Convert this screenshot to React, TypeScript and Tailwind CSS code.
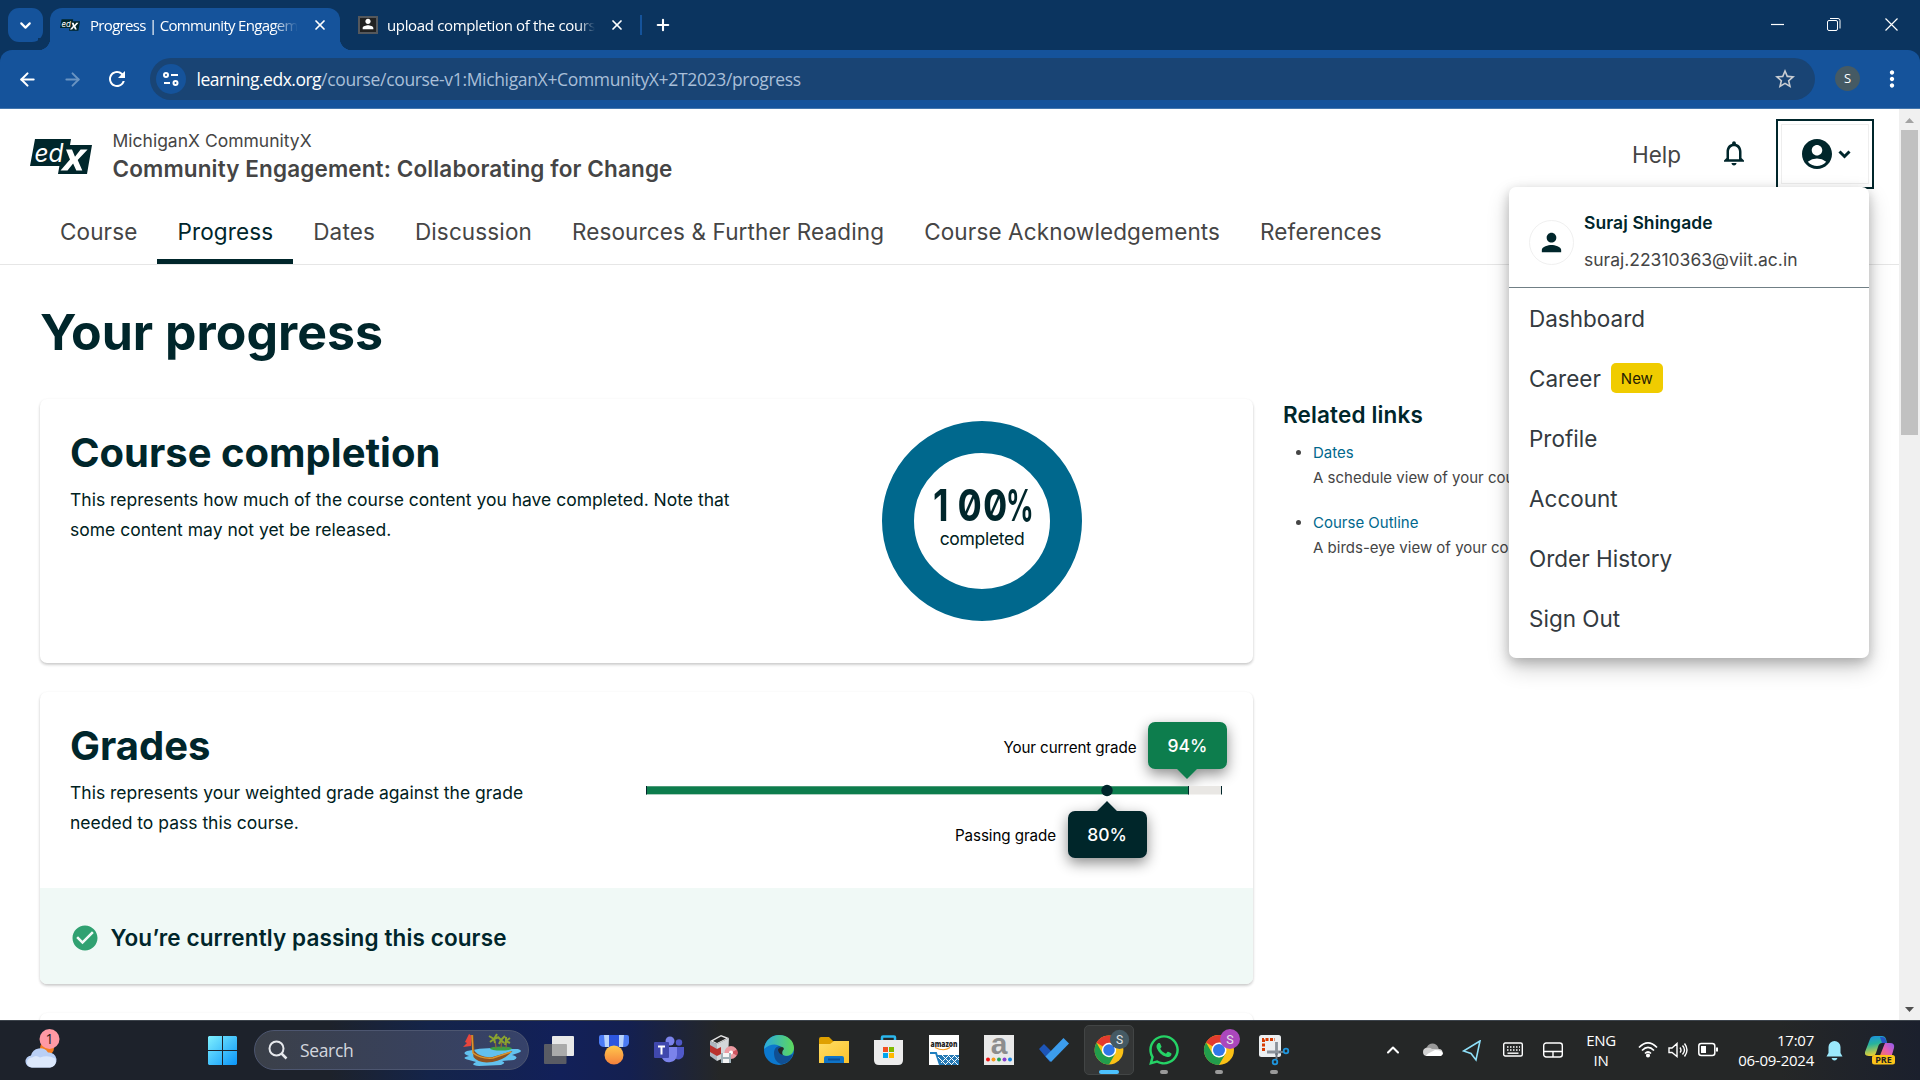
import React from "react";
import { ArrowLeft, ArrowRight, X, Plus, ChevronUp, ChevronDown } from "lucide-react";
import { MdRefresh, MdStarBorder, MdAccountCircle, MdPerson, MdNotificationsNone, MdCheckCircle, MdMoreVert } from "react-icons/md";
import { FaWhatsapp } from "react-icons/fa";

const UI = "font-['Open_Sans','Noto_Sans',sans-serif]";
const INTER = "font-['Inter',sans-serif]";

function EdxLogo({ className }: { className: string }) {
  return (
    <svg className={className} viewBox="0 0 62 35">
      <path d="M5 0h36l-1 6H62l-5 29H28l1.400-8H0z" fill="#00262b" />
      <text x="4.500" y="23" fontFamily="Inter, sans-serif" fontSize="25" fontStyle="italic" fill="#fff" textLength="29" lengthAdjust="spacingAndGlyphs">ed</text>
      <path d="M36 10.500h6l3 7.300 5.600-7.300h7L47.700 21l4.600 10.500h-6l-3.200-7-5.600 7h-7l9.500-11z" fill="#fff" />
    </svg>
  );
}

function BrowserTabs() {
  return (
    <div className={`flex h-[50px] bg-[#0b345f] text-white ${UI}`}>
      <div className="ml-[8px] mt-[8px] flex h-[34px] w-[35px] items-center justify-center rounded-[11px] bg-[#15539b]">
        <ChevronDown size={17} strokeWidth={3} />
      </div>
      <div className="relative ml-[7px] mt-[8px] flex h-[42px] w-[290px] rounded-t-[12px] bg-[#15539b]">
        <div className="absolute -left-[12px] bottom-0 size-[12px] bg-[radial-gradient(circle_at_0_0,#0b345f_12px,#15539b_12.5px)]" />
        <div className="absolute -right-[12px] bottom-0 size-[12px] bg-[radial-gradient(circle_at_100%_0,#0b345f_12px,#15539b_12.5px)]" />
        <EdxLogo className="ml-[10px] mt-[11px] h-[12px] w-[20px]" />
        <div className="ml-[10px] mt-[7px] w-[208px] shrink-0 overflow-hidden whitespace-nowrap text-[15px] leading-[20px] tracking-[-0.68px] [mask-image:linear-gradient(90deg,#000_88%,transparent)]">Progress | Community Engagement</div>
        <X className="ml-[14px] mt-[9px] shrink-0" size={16} strokeWidth={2.6} />
      </div>
      <div className="ml-[18px] mt-[16px] flex h-[18px] w-[20px] items-end justify-center border-[2px] border-[#55585c] bg-[#222]">
        <MdPerson size={16} color="#fff" />
      </div>
      <div className="ml-[9px] mt-[15px] w-[208px] shrink-0 overflow-hidden whitespace-nowrap text-[15px] leading-[20px] tracking-[-0.35px] [mask-image:linear-gradient(90deg,#000_92%,transparent)]">upload completion of the course</div>
      <X className="ml-[14px] mt-[17px]" size={16} strokeWidth={2.6} />
      <div className="ml-[15px] mt-[15px] h-[20px] w-[2px] bg-[#15539b]" />
      <Plus className="ml-[12px] mt-[16px]" size={18} strokeWidth={2.8} />
      <div className="flex-1" />
      <svg className="h-[50px] w-[149px]" viewBox="0 0 149 50" fill="none" stroke="#fff">
        <path d="M0 24.500h13" strokeWidth="1.200" />
        <rect x="56.500" y="20.500" width="10" height="10" rx="1.500" />
        <path d="M59 18.500h8q2 0 2 2v8" />
        <path d="M114.500 18.500l12 12m0-12l-12 12" strokeWidth="1.200" />
      </svg>
    </div>
  );
}

function Toolbar() {
  return (
    <div className="bg-[#0b345f]">
      <div className={`flex h-[59px] items-start rounded-t-[12px] border-b border-[#4376ad] bg-[#15539b] text-white ${UI}`}>
        <ArrowLeft className="ml-[17px] mt-[18.5px]" size={21} strokeWidth={2.4} />
        <ArrowRight className="ml-[24px] mt-[18.5px] text-[#6a94c2]" size={21} strokeWidth={2.2} />
        <MdRefresh className="ml-[22px] mt-[16.5px]" size={24} />
        <div className="ml-[21px] mt-[8px] flex h-[42px] w-[1665px] items-center rounded-full bg-[#194474]">
          <div className="ml-[6px] flex size-[30px] items-center justify-center rounded-full bg-[#15539b]">
            <svg width="16" height="16" viewBox="0 0 16 16" fill="none" stroke="#fff" strokeWidth="2">
              <circle cx="3" cy="4" r="2" /><path d="M8 4h7M1 12h6" /><circle cx="12.500" cy="12" r="2" />
            </svg>
          </div>
          <div className="ml-[10.5px] flex-1 whitespace-nowrap text-[17.5px] leading-[24px] tracking-[-0.5px]">
            learning.edx.org<span className="tracking-[-0.34px] text-[#a9bfd8]">/course/course-v1:MichiganX+CommunityX+2T2023/progress</span>
          </div>
          <MdStarBorder className="mr-[18px]" size={24} color="#c9cdd2" />
        </div>
        <div className="ml-[20px] mt-[16px] flex size-[25px] items-center justify-center rounded-full bg-[#455a64] text-[13px]">S</div>
        <MdMoreVert className="ml-[19px] mt-[16px]" size={26} />
      </div>
    </div>
  );
}

const menu = ["Dashboard", "Career", "Profile", "Account", "Order History", "Sign Out"];

function AccountMenu() {
  return (
    <div className="absolute left-[1509px] top-[78px] z-10 h-[471px] w-[360px] rounded-[7px] bg-white text-[22.5px] leading-[30px] text-[#333a40] shadow-[0_10px_22px_rgba(0,0,0,.2),0_4px_12px_rgba(0,0,0,.2)]">
      <div className="flex h-[101px] border-b border-[#707f85]">
        <div className="ml-[20px] mt-[33px] flex size-[45px] items-center justify-center rounded-full border border-[#f0f0f0] text-[#00262b]">
          <MdPerson size={29} />
        </div>
        <div className="ml-[10px] whitespace-nowrap">
          <div className="mt-[21px] text-[17.5px] font-semibold leading-[30px] tracking-[0.08px] text-[#00262b]">Suraj Shingade</div>
          <div className="mt-[7px] text-[17.5px] leading-[30px] text-[#454545]">suraj.22310363@viit.ac.in</div>
        </div>
      </div>
      {menu.map((m) => (
        <div key={m} className="flex h-[60px] items-center pl-[20px] pt-[2px]">
          {m}
          {m === "Career" && <span className="ml-[10px] mt-[-2px] flex h-[30px] w-[52px] items-center justify-center rounded-[5px] bg-[#f0cc00] pt-[2px] text-[15px] text-[#262003]">New</span>}
        </div>
      ))}
    </div>
  );
}

const tabs = ["Course", "Progress", "Dates", "Discussion", "Resources & Further Reading", "Course Acknowledgements", "References"];

function CourseHeader() {
  return (
    <header className="h-[156px] border-b border-[#e6e6e6]">
      <div className="flex h-[94px]">
        <EdxLogo className="ml-[30px] mt-[30px] h-[35px] w-[62px]" />
        <div className="ml-[20.5px] mt-[18px] flex-1 whitespace-nowrap text-[#454545]">
          <div className="text-[17.5px] leading-[28px]">MichiganX CommunityX</div>
          <div className="text-[22.5px] font-semibold leading-[28px] tracking-[0.13px]">Community Engagement: Collaborating for Change</div>
        </div>
        <div className="mt-[31px] text-[22.5px] leading-[30px] text-[#454545]">Help</div>
        <MdNotificationsNone className="ml-[38px] mt-[29px] text-[#00262b]" size={30} />
        <div className="ml-[27px] mt-[10px] h-[70px] w-[98px] border-2 border-[#00262b] p-[3px]">
          <div className="flex h-[60px] items-center justify-center border border-[#eee] pr-[1px] text-[#00262b]">
            <MdAccountCircle size={36} />
            <svg className="ml-[3px]" width="13" height="9" viewBox="0 0 13 9" fill="none" stroke="#00262b" strokeWidth="3"><path d="M1.500 1.500l5 5 5-5" /></svg>
          </div>
        </div>
        <div className="w-[25px]" />
      </div>
      <nav className="ml-[40px] flex h-[61px] text-[22.5px] tracking-[0.13px] text-[#454545]">
        {tabs.map((t) => (
          <div key={t} className={t === "Progress" ? "h-[61px] whitespace-nowrap border-b-[5px] border-[#00262b] px-[20px] pt-[14px] leading-[30px] text-[#00262b]" : "whitespace-nowrap px-[20px] pt-[14px] leading-[30px]"}>{t}</div>
        ))}
      </nav>
    </header>
  );
}

function GradeBar() {
  return (
    <svg className="h-[196px] w-[613px] overflow-visible" viewBox="640 692 613 196" fontFamily="Inter, sans-serif">
      <defs>
        <filter id="sh" x="-50%" y="-50%" width="200%" height="220%"><feDropShadow dx="0" dy="5" stdDeviation="7" floodOpacity=".45" /></filter>
      </defs>
      <g filter="url(#sh)">
        <path d="M1155 722h65a7 7 0 0 1 7 7v33a7 7 0 0 1-7 7h-23l-10 10-10-10h-22a7 7 0 0 1-7-7v-33a7 7 0 0 1 7-7z" fill="#0d7d4d" />
        <path d="M1075 811h22l10-10 10 10h23a7 7 0 0 1 7 7v33a7 7 0 0 1-7 7h-65a7 7 0 0 1-7-7v-33a7 7 0 0 1 7-7z" fill="#00262b" />
      </g>
      <rect x="646" y="786" width="576" height="8.500" fill="#e9e7e4" />
      <rect x="646" y="786.300" width="543" height="8" fill="#0d7d4d" />
      <path d="M646.500 786v8.500M1188.500 786v8.500M1221.500 786v8.500" stroke="#00262b" />
      <circle cx="1107" cy="790.500" r="5.700" fill="#00262b" />
      <text x="1003.500" y="753.200" fontSize="15.200" textLength="133">Your current grade</text>
      <text x="955" y="841.200" fontSize="15.200" textLength="101">Passing grade</text>
      <text x="1187.500" y="752" fontSize="17.500" fontWeight="500" fill="#fff" textAnchor="middle">94%</text>
      <text x="1107" y="841" fontSize="17.500" fontWeight="500" fill="#fff" textAnchor="middle">80%</text>
    </svg>
  );
}

const CARD = "rounded-[7px] bg-white shadow-[0_2px_3px_rgba(0,0,0,.14),0_1px_3px_rgba(0,0,0,.1)]";

function Page() {
  return (
    <div className={`relative flex h-[911px] overflow-hidden bg-white ${INTER}`}>
      <div className="w-[1899px]">
        <CourseHeader />
        <h1 className="ml-[40px] mt-[37px] h-[60px] whitespace-nowrap text-[50px] font-bold leading-[60px] text-[#00262b]">Your progress</h1>
        <div className="mt-[37px] flex pl-[40px]">
          <div className="w-[1213px]">
            <section className={`flex h-[264px] pl-[30px] ${CARD}`}>
              <div className="w-[812px] whitespace-nowrap text-[#002121]">
                <h2 className="mt-[29px] text-[40px] font-bold leading-[50px] text-[#00262b]">Course completion</h2>
                <p className="mt-[7px] text-[17.5px] leading-[30px]">This represents how much of the course content you have completed. Note that<br />some content may not yet be released.</p>
              </div>
              <div className="mt-[22px] flex size-[200px] flex-col items-center rounded-full border-[32px] border-[#00688d] pt-[30px] text-[#00262b]">
                <div className="flex h-[44px] w-[98px] items-center whitespace-nowrap text-[44px] font-bold leading-[44px]">
                  <span className="inline-block w-[73px] origin-left scale-x-[0.82] tracking-[1.3px] [font-feature-settings:'zero']"><span className="inline-block w-[30px]">1</span>00</span>
                  <span className="inline-block w-[25px] origin-left scale-x-[0.62]">%</span>
                </div>
                <div className="mt-[1px] text-[17.5px] leading-[22px] tracking-[-0.3px] text-[#002121]">completed</div>
              </div>
            </section>
            <section className={`mt-[29px] h-[292px] overflow-hidden ${CARD}`}>
              <div className="flex h-[196px] pl-[30px]">
                <div className="w-[570px] whitespace-nowrap text-[#002121]">
                  <h2 className="mt-[29px] text-[40px] font-bold leading-[50px] text-[#00262b]">Grades</h2>
                  <p className="mt-[7px] text-[17.5px] leading-[30px]">This represents your weighted grade against the grade<br />needed to pass this course.</p>
                </div>
                <GradeBar />
              </div>
              <div className="flex h-[96px] items-center bg-[#f0f9f6] pl-[30px] pt-[4px] text-[22.5px] font-semibold tracking-[0.12px] text-[#00262b]">
                <MdCheckCircle size={30} color="#30a171" /><span className="ml-[10.5px]">You’re currently passing this course</span>
              </div>
            </section>
            <section className={`mt-[29px] h-[60px] ${CARD}`} />
          </div>
          <aside className="ml-[30px] whitespace-nowrap text-[15px] leading-[25px] text-[#454545]">
            <h3 className="mb-[10px] mt-[1px] text-[22.5px] font-semibold leading-[30px] tracking-[0.15px] text-[#00262b]">Related links</h3>
            <ul className="list-disc pl-[30px]">
              <li className="mb-[20px]"><span className="text-[#00688d]">Dates</span><br />A schedule view of your course</li>
              <li><span className="text-[#00688d]">Course Outline</span><br />A birds-eye view of your course</li>
            </ul>
          </aside>
        </div>
      </div>
      <div className="flex w-[21px] flex-col items-center bg-[#f0f0f0]">
        <svg width="21" height="21"><path d="M6 14h9l-4.500-5z" fill="#a3a3a3" /></svg>
        <div className="h-[305px] w-[17px] bg-[#c1c1c1]" />
        <div className="flex-1" />
        <svg width="21" height="21"><path d="M6 8h9l-4.500 5z" fill="#505050" /></svg>
      </div>
      <AccountMenu />
    </div>
  );
}

function Chrome({ badge }: { badge: string }) {
  return (
    <svg width="50" height="50" viewBox="0 0 50 50">
      <circle cx="25" cy="25" r="15" fill="#fbc116" />
      <path d="M25 25L12 17.500A15 15 0 0 1 38 17.500H25z" fill="#e33b2e" />
      <path d="M12 17.500L18.500 28.800 25 32.500l6.500-3.700L25 40A15 15 0 0 1 12 17.500z" fill="#229d4c" />
      <circle cx="25" cy="25" r="7.500" fill="#fff" /><circle cx="25" cy="25" r="6" fill="#3177e8" />
      <circle cx="36" cy="14" r="10" fill={badge} />
      <text x="36" y="18.500" fontSize="12.500" fontFamily="Roboto, sans-serif" fill="#e4e8ea" textAnchor="middle">S</text>
    </svg>
  );
}

const I = ({ children }: { children: React.ReactNode }) => <svg width="30" height="30" viewBox="0 0 30 30" className="overflow-visible">{children}</svg>;

const apps: React.ReactNode[] = [
  <I><rect x="8" y="1" width="22" height="20" rx="1" fill="#e8e8e8" /><rect x="0" y="9" width="22.500" height="20" rx="1" fill="#666" fillOpacity=".85" /><rect x="8" y="9" width="14.500" height="12" fill="#aaa" /></I>,
  <I><path d="M0 2q0-2 2-2h26q2 0 2 2v6q-1 4-5 4H5Q1 12 0 8z" fill="#4b7bf5" /><path d="M5 0h5v12H6zM20 0h5l-1 12h-4z" fill="#b9d3fb" /><path d="M10 0h10v12H10z" fill="#2d56df" /><circle cx="15" cy="20" r="9.500" fill="url(#gold)" /><defs><linearGradient id="gold" x2="0" y2="1"><stop stopColor="#ffc94d" /><stop offset="1" stopColor="#f5803c" /></linearGradient></defs></I>,
  <I><circle cx="16" cy="6" r="4.500" fill="#7b83eb" /><circle cx="25" cy="7.500" r="3.200" fill="#5059c9" /><path d="M20 12h10v7a6 6 0 0 1-8 5z" fill="#5059c9" /><path d="M9 12h14v8a8 8 0 0 1-15 3z" fill="#7b83eb" /><rect y="7" width="15" height="16" rx="1" fill="#4048ad" /><path d="M4 11.500h7M7.500 11.500v8" stroke="#fff" strokeWidth="2" /></I>,
  <I><path d="M1 6l7 3v17l-7-5z" fill="#aeb6c0" /><path d="M8 9l12-6-1 18-11 5z" fill="#d3d6da" /><path d="M1 10l7 4 4-2v7l-4 2-7-4z" fill="#b9322f" /><path d="M1 6L12 0l8 3L8 9z" fill="#e6e6e6" /><path d="M4 6l8-4.500 5 2L8 8z" fill="#252525" /><circle cx="22" cy="17.500" r="6.500" fill="#ec9ba2" /><path d="M22 17.500l6-3a7 7 0 0 1 0 6z" fill="#cf5560" /><circle cx="22" cy="17.500" r="2" fill="#fff" /><path d="M12 18h10v10H12z" fill="#9fb0b8" /><path d="M14 18h6v4h-6zM14 24h6v4h-6z" fill="#f5f5f5" /></I>,
  <I><defs><linearGradient id="eg"><stop stopColor="#2aa9e0" /><stop offset="1" stopColor="#5ed95a" /></linearGradient></defs><circle cx="15" cy="15" r="15" fill="#0c78ce" /><path d="M0 14C1 5 8 0 15 0c9 0 15 6 15 13 0 5-4 8-8 8-3 0-5-1-4-3 2-7-8-13-18-4z" fill="url(#eg)" /><path d="M10 18c0-5 4-8 8-6-4 2-1 7 1 8 3 2 7 1 10-1-3 8-8 10-12 10-5-2-7-6-7-11z" fill="#104f93" /><path d="M14 14q5-4 6 0-3 3-1 6-5-1-5-6z" fill="#252727" /></I>,
  <I><path d="M0 4q0-2 2-2h8l4 4h14q2 0 2 2v8H0z" fill="#dfa000" /><path d="M0 9h11l4-3h15v22H0z" fill="url(#fold)" /><path d="M5 28v-5q0-2 2-2h16q2 0 2 2v5z" fill="#0f74c8" /><path d="M9 24.500h12" stroke="#0a4f96" strokeWidth="2" /><defs><linearGradient id="fold" x2="1" y2="1"><stop stopColor="#ffdd65" /><stop offset="1" stopColor="#fbc22c" /></linearGradient></defs></I>,
  <I><path d="M8 7V2.500q0-1 1-1h11q1 0 1 1V7" fill="none" stroke="#2bb8ee" strokeWidth="2.500" /><path d="M0 5h29v20q0 5-5 5H5q-5 0-5-5z" fill="#ececec" /><path d="M9 12h5v5H9z" fill="#f25022" /><path d="M15 12h5v5h-5z" fill="#7fba00" /><path d="M9 18h5v5H9z" fill="#00a4ef" /><path d="M15 18h5v5h-5z" fill="#ffb900" /></I>,
  <I><path d="M0 0h30v30H0z" fill="#fff" /><text x="1.500" y="12" fontSize="8.500" fontWeight="800" fontFamily="Open Sans, sans-serif" textLength="27" lengthAdjust="spacingAndGlyphs" fill="#222">amazon</text><path d="M6 12.500q9 4.500 15 0" fill="none" stroke="#f59b22" strokeWidth="1.200" /><path d="M1 18h6l4 12" fill="none" stroke="#1f7fc0" strokeWidth="2" /><path d="M8 20h22v10H11z" fill="#2479b5" /><path d="M9 22l8 8m-4-10l10 10M19 20l10 10M25 20l5 5M12 28l8-8m-4 10l10-10M22 30l8-8" stroke="#fff" strokeWidth="1" /></I>,
  <I><path d="M0 0h30v30H0z" fill="#e9e9e9" /><text x="15" y="19" fontSize="30" fontWeight="700" fontFamily="Liberation Sans, sans-serif" textAnchor="middle" fill="#8d8d8d">a</text><circle cx="4" cy="24.500" r="2" fill="#e11" /><circle cx="9.500" cy="24.500" r="2" fill="#f69a19" /><circle cx="15" cy="24.500" r="2" fill="#23a455" /><circle cx="20.500" cy="24.500" r="2" fill="#883fd0" /><circle cx="26" cy="24.500" r="2" fill="#1686e0" /></I>,
  <I><path d="M0 14l5-5 10 10-4 8z" fill="#1d55b8" /><path d="M6.500 21.500L24.500 3l5.500 5.500L12 27z" fill="#3c9ded" /></I>,
  <Chrome badge="#455a64" />,
  <FaWhatsapp size={34} color="#25d366" />,
  <Chrome badge="#ab47bc" />,
  <I><rect width="22" height="22" rx="2.500" fill="#eceff1" /><path d="M4.500 16V4.500H16" fill="none" stroke="#d83b01" strokeWidth="3" strokeDasharray="3 1.500" /><path d="M8 17h14M17.500 7v13" stroke="#8a929b" strokeWidth="2.800" /><path d="M17.500 18v6M20 17h4" stroke="#6e7780" strokeWidth="2" /><circle cx="27" cy="16" r="2.300" fill="none" stroke="#1e95dd" strokeWidth="1.800" /><circle cx="16" cy="27" r="2.300" fill="none" stroke="#1e95dd" strokeWidth="1.800" /></I>,
];

function Boat() {
  return (
    <svg className="h-[34px] w-[60px]" viewBox="0 0 60 34">
      <path d="M6 18q20-5 40-2h11q6 2 0 4l-6 2q8 2 2 5l-12 1q5 2-1 4l-22 1q-10-1-3-4l-7-2q-9-2 0-4-8-3-2-5z" fill="#62c1ee" />
      <ellipse cx="40" cy="15.500" rx="11" ry="2" fill="#3d9f43" />
      <path d="M35 15q0-5-2-9M40 15q1-4 0-8M45 15q1-4 0-7" stroke="#8b6a35" strokeWidth="1.300" fill="none" />
      <path d="M33 6l-5-3M33 6l-4 3M33 6l3-5M33 6l5-2M33 6l1 4M40 7l-3-3M40 7l4-4M40 7l-2 4M40 7l3 3M45 8l4-3M45 8l4 2M45 8v-4M45 8l-1 4" stroke="#8aa32f" strokeWidth="2" fill="none" />
      <path d="M2 14l4-4-2-1 4-8 3 2-1 10z" fill="#e8453c" />
      <path d="M10 2h2.500l1 16q6 7 18 6l20-6q-8 9-20 11-14 2-19-5z" fill="#8e5220" />
      <path d="M11 2l1 18q8 6 20 5l18-6" fill="none" stroke="#d9962f" strokeWidth="1.500" />
    </svg>
  );
}

function Taskbar() {
  return (
    <div className={`flex h-[60px] border-t border-[#3c434b] bg-[linear-gradient(90deg,#1d222b_0px,#1d222b_330px,#14244a_430px,#122059_560px,#142050_630px,#252727_720px,#252727_1780px,#1b202d_1920px)] text-white ${UI}`}>
      <svg className="ml-[24px] mt-[6px] h-[46px] w-[36px]" viewBox="24 1026 36 46">
        <circle cx="47" cy="1047" r="7" fill="#f57c1f" />
        <path d="M32 1066.500a6 6 0 0 1-1-12 9.500 9.500 0 0 1 17-3 7.500 7.500 0 0 1 2 15z" fill="#b9cff5" />
        <path d="M32 1066.500a5 5 0 0 1 0-10q4-3 8 0 8-3 15 1a6 6 0 0 1-5 9z" fill="#dce8fb" />
        <circle cx="49.500" cy="1038" r="10" fill="#ff99a4" />
        <text x="49.500" y="1043" textAnchor="middle" fontSize="14" fill="#1b1b1b">1</text>
      </svg>
      <svg className="ml-[148px] mt-[15px]" width="29" height="29" viewBox="0 0 29 29">
        <defs><linearGradient id="win" x2="29" y2="29" gradientUnits="userSpaceOnUse"><stop stopColor="#7ff0ff" /><stop offset="1" stopColor="#0a95f8" /></linearGradient></defs>
        <path d="M1 0h13v14H0V1zM15 0h13l1 1v13H15zM0 15h14v14H1l-1-1zM15 15h14v13l-1 1H15z" fill="url(#win)" />
      </svg>
      <div className="ml-[17px] mt-[9px] flex h-[40px] w-[275px] items-center rounded-full border border-[#4d5670] bg-[linear-gradient(90deg,#3b4049,#36426a)]">
        <svg className="ml-[13px]" width="20" height="20" viewBox="0 0 20 20" fill="none" stroke="#e6e8ec" strokeWidth="2"><circle cx="8.500" cy="8.500" r="7" /><path d="M13.500 13.500l5 5" strokeWidth="2.500" /></svg>
        <span className="ml-[12px] flex-1 text-[17.5px] tracking-[-0.35px] text-[#d3d6de]">Search</span>
        <div className="mr-[7px]"><Boat /></div>
      </div>
      <div className="ml-[2.5px] flex">
        {apps.map((a, i) => (
          <div key={i} className={i === 10 ? "relative mx-[2.5px] mt-[4px] flex h-[50px] w-[50px] items-center justify-center rounded-[5px] border border-[#424545] bg-[#343636]" : "relative mt-[4px] flex h-[50px] w-[55px] items-center justify-center"}>
            {a}
            {i === 10 && <div className="absolute left-[14px] top-[44px] h-[4px] w-[20px] rounded-full bg-[#4cc2ff]" />}
            {i > 10 && <div className="absolute left-[23.5px] top-[45px] h-[4px] w-[8px] rounded-full bg-[#9a9a9a]" />}
          </div>
        ))}
      </div>
      <div className="flex-1" />
      <ChevronUp className="mt-[19px]" size={20} strokeWidth={2.5} />
      <svg className="ml-[20px] mt-[21px]" width="20" height="16" viewBox="0 0 20 16"><path d="M3 12a4 4 0 0 1 1-7 6 6 0 0 1 11 0l2 5z" fill="#999" /><path d="M4 14a4 4 0 0 1 0-8q3-1 5 1l7 0a3.500 3.500 0 0 1 0 7z" fill="#d2d2d2" /><path d="M3 14q0-2 9-6 8 0 8 4l-2 2z" fill="#fff" /></svg>
      <svg className="ml-[19px] mt-[19px]" width="20" height="22" viewBox="0 0 20 22" fill="none" stroke="#8edff8" strokeWidth="1.600"><path d="M18 1L1.500 11l7.500 2.500 5 6.500z" /></svg>
      <svg className="ml-[21px] mt-[21px]" width="20" height="16" viewBox="0 0 20 16" fill="none" stroke="#fff" strokeWidth="1.400"><rect x=".7" y="1" width="18.600" height="13" rx="1.500" /><path d="M4 5h13M4 8h13" strokeDasharray="1.500 1.500" /><path d="M4.500 11.200h11" /></svg>
      <svg className="ml-[20px] mt-[21px]" width="20" height="16" viewBox="0 0 20 16" fill="none" stroke="#fff" strokeWidth="1.400"><rect x=".7" y="1" width="18.600" height="14" rx="2.500" /><path d="M1 9.500h18M10 9.500V15" /></svg>
      <div className="ml-[18px] mt-[9px] w-[40px] text-center text-[15px] leading-[20px] tracking-[-0.3px]">ENG<br />IN</div>
      <svg className="ml-[17px] mt-[20px]" width="20" height="17" viewBox="0 0 20 17" fill="none" stroke="#fff" strokeWidth="1.700"><path d="M1 6.500q9-9 18 0M4 9.500q6-6 12 0M7 12.500q3-3 6 0" /><circle cx="10" cy="14.500" r="1.200" fill="#fff" /></svg>
      <svg className="ml-[10px] mt-[21px]" width="20" height="17" viewBox="0 0 20 17" fill="none" stroke="#fff" strokeWidth="1.400"><path d="M1 6h3l5-4.500v13L4 10.500H1zM12 5.500q2 3 0 5M14.500 3.500q4 4.500 0 9M16.500 1.500q5 6.500 0 13" /></svg>
      <svg className="ml-[10px] mt-[21px]" width="20" height="16" viewBox="0 0 20 16"><rect x=".8" y="1.500" width="16" height="12" rx="2.500" fill="none" stroke="#fff" strokeWidth="1.500" /><path d="M3 4h5v7H3zM18 5.500h2v4h-2z" fill="#fff" /></svg>
      <div className="ml-[7px] mt-[9px] w-[89px] whitespace-nowrap text-right text-[15px] leading-[20px] tracking-[-0.25px]">17:07<br />06-09-2024</div>
      <svg className="ml-[12px] mt-[20px]" width="17" height="20" viewBox="0 0 17 20" fill="#9be9fc"><path d="M8.500 0a6 6 0 0 1 6 6v6l2 3.500H.500l2-3.500V6a6 6 0 0 1 6-6zM5.500 17h6q-1 2.500-3 2.500T5.500 17z" /></svg>
      <svg className="ml-[22px] mr-[25px] mt-[15px]" width="30" height="30" viewBox="0 0 30 30">
        <defs><linearGradient id="cp1" x2=".2" y2="1"><stop stopColor="#1a8de8" /><stop offset=".45" stopColor="#27b39c" /><stop offset="1" stopColor="#e8d033" /></linearGradient><linearGradient id="cp2" x1="1" x2="0" y2="1"><stop stopColor="#8c5cf0" /><stop offset=".5" stopColor="#e65fb0" /><stop offset="1" stopColor="#f7813e" /></linearGradient></defs>
        <path d="M5 3q1-3 5-3h7q3 0 4 3l1 4h-5q-3 0-4 4l-2 6q-1 3-4 3H4q-5 0-4-4z" fill="url(#cp1)" />
        <path d="M15 1h2q3 0 4 3l1 3h-5z" fill="#2456c4" />
        <path d="M20 7h5q5 0 4 5l-3 10H14z" fill="url(#cp2)" />
        <rect x="7" y="19" width="23" height="9.500" rx="2.500" fill="#fcc419" />
        <text x="18.500" y="27" fontSize="9" fontWeight="700" textAnchor="middle" fill="#222">PRE</text>
      </svg>
    </div>
  );
}

export default function App() {
  return (
    <div className="h-[1080px] w-[1920px] overflow-hidden bg-white">
      <BrowserTabs />
      <Toolbar />
      <Page />
      <Taskbar />
    </div>
  );
}
